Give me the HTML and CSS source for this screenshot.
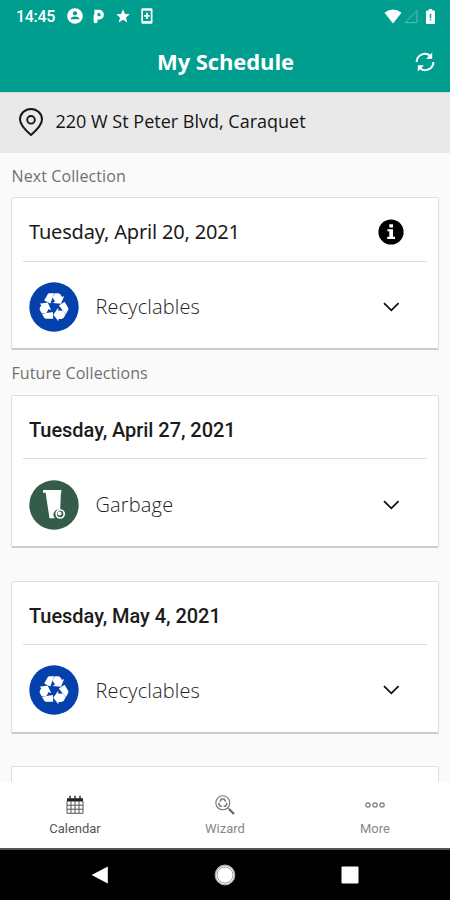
FILE: index.html
```html
<!DOCTYPE html>
<html lang="en">
<head>
<meta charset="utf-8">
<title>My Schedule</title>
<link rel="stylesheet" href="styles.css">
</head>
<body>
<svg class="defs" aria-hidden="true">
  <symbol id="recycle" viewBox="-25 -25 50 50">
    <circle r="24.7" fill="#0441ad"/>
    <g id="arm" fill="#fff">
      <path d="M-9.8-6.6-6.4-12.6Q-5.7-13.8-4.4-13.8H.3L-3.7-3.4Z"/>
      <path d="M.8-13.8H4.2Q5.8-13.8 6.7-12.2L8-9.9 10.2-11 7-3.2-1.4-4 1-5.6-1.4-9.6Z"/>
    </g>
    <use href="#arm" transform="rotate(120)"/>
    <use href="#arm" transform="rotate(240)"/>
  </symbol>
  <symbol id="bin" viewBox="-25 -25 50 50">
    <circle r="24.7" fill="#355c49"/>
    <path d="M-11-15H7.3V-12.2H6.9L6.2 5A5 5 0 0 0 1 13.3H-4.5L-8.4-12.2H-11Z" fill="#fff"/>
    <circle cx="6.2" cy="9" r="4" fill="#355c49" stroke="#fff" stroke-width="1.7"/>
    <circle cx="5.6" cy="8.6" r="2" fill="#fff"/>
  </symbol>
  <symbol id="chevron" viewBox="0 0 18 12">
    <path d="M2 2.2 9.3 9.3 16.6 2.2" fill="none" stroke="#111" stroke-width="1.8"/>
  </symbol>
</svg>

<header class="top">
  <div class="status">
    <span class="clock">14:45</span>
    <svg class="s-user" width="16" height="16" viewBox="0 0 16 16"><circle cx="8" cy="8" r="7.8" fill="#fff"/><circle cx="8" cy="5.3" r="2.1" fill="#009e8f"/><path d="M3.6 11.3Q4 8.6 8 8.6T12.4 11.3Z" fill="#009e8f"/></svg>
    <svg class="s-p" width="12" height="15" viewBox="0 0 12 15"><path fill="#fff" fill-rule="evenodd" d="M1.4.8H6A4.9 4.9 0 0 1 6 10.6H4.6V12.6Q4.4 14.2 2.6 14.2T.6 12.6V6.5Q.6 5.6 1.4 5.2ZM4.6 4.1V7.3H6A1.6 1.6 0 0 0 6 4.1Z"/></svg>
    <svg class="s-star" width="14" height="14" viewBox="0 0 14 14"><path fill="#fff" d="M7 .3 9 5 13.8 5.3 10 8.6 11.3 13.5 7 10.8 2.7 13.5 4 8.6.2 5.3 5 5Z"/></svg>
    <svg class="s-phone" width="12" height="16" viewBox="0 0 12 16"><rect x=".3" y=".2" width="11.2" height="15.6" rx="1.4" fill="#fff"/><rect x="2" y="2.7" width="7.8" height="10.4" fill="#009e8f"/><path d="M5.9 4.7V11M3.2 7.9H8.6" stroke="#fff" stroke-width="1.7"/></svg>
    <span class="spacer"></span>
    <svg width="18" height="15" viewBox="0 0 18 15"><path fill="#fff" d="M.5 3.7Q9-2.8 17.5 3.7L9 14.5Z"/></svg>
    <svg class="s-signal" width="14" height="15" viewBox="0 0 14 15"><path d="M13 1.4V13.6H1Z" fill="none" stroke="#58bdb2" stroke-width="1"/></svg>
    <svg class="s-batt" width="9" height="15" viewBox="0 0 9 15"><path fill="#fff" d="M2.8 0H6.2V1.4H8Q9 1.4 9 2.4V14Q9 15 8 15H1Q0 15 0 14V2.4Q0 1.4 1 1.4H2.8Z"/><path d="M4.5 4.7V9.2M4.5 10.3V11.6" stroke="#009e8f" stroke-width="1.5"/></svg>
  </div>
  <div class="titlebar">
    <h1>My Schedule</h1>
    <svg class="refresh" width="20" height="20" viewBox="0 0 20 20"><g id="sync"><path d="M1.6 10A8.3 8.3 0 0 1 15.4 4" fill="none" stroke="#fff" stroke-width="2"/><path d="M17.2.6V6.8H11Z" fill="#fff"/></g><use href="#sync" transform="rotate(180 10 10)"/></svg>
  </div>
</header>

<div class="address">
  <svg width="26" height="30" viewBox="0 0 26 30"><path d="M13 28Q2 18.5 2 12.5A11 10.6 0 0 1 24 12.5Q24 18.5 13 28Z" fill="none" stroke="#181818" stroke-width="2"/><circle cx="13" cy="12.8" r="3.8" fill="none" stroke="#181818" stroke-width="1.9"/></svg>
  <span>220 W St Peter Blvd, Caraquet</span>
</div>

<main class="content">
  <h2 class="label-next">Next Collection</h2>
  <section class="card first">
    <div class="date next"><span>Tuesday, April 20, 2021</span>
      <svg class="info" width="26" height="26" viewBox="0 0 26 26"><circle cx="13" cy="13" r="12.6" fill="#000"/><path fill="#fff" d="M11.3 5.2H15V8.4H11.3ZM9.4 10.2H15V17.8H17V20H9.2V17.8H11.3V12.3H9.4Z"/></svg></div>
    <div class="item"><svg class="badge"><use href="#recycle"/></svg><span>Recyclables</span><svg class="chev"><use href="#chevron"/></svg></div>
  </section>
  <h2 class="label-future">Future Collections</h2>
  <section class="card">
    <div class="date"><span>Tuesday, April 27, 2021</span></div>
    <div class="item"><svg class="badge"><use href="#bin"/></svg><span>Garbage</span><svg class="chev"><use href="#chevron"/></svg></div>
  </section>
  <section class="card later">
    <div class="date"><span>Tuesday, May 4, 2021</span></div>
    <div class="item"><svg class="badge"><use href="#recycle"/></svg><span>Recyclables</span><svg class="chev"><use href="#chevron"/></svg></div>
  </section>
  <section class="card later"></section>
</main>

<nav class="tabs">
  <div class="tab active"><svg width="20" height="20" viewBox="0 0 20 20"><path d="M2 3.2H18V6.5H2Z" fill="#222"/><path d="M5 .8V4M10 .8V4M15 .8V4" stroke="#444" stroke-width="1.7"/><path d="M2 6V18.3H18V6M2 10.2H18M2 14.2H18M6 6V18M10 6V18M14 6V18" fill="none" stroke="#555" stroke-width="1"/></svg><span>Calendar</span></div>
  <div class="tab"><svg width="20" height="20" viewBox="0 0 20 20"><circle cx="7.8" cy="7.8" r="7" fill="none" stroke="#777" stroke-width="1.1"/><path d="M5 6.6 6.4 4H9.2L10.6 6.6M11.4 7.8 11.8 9 10.4 11.3H8.6M6.8 11.3H5.2L3.8 9 4.4 7.8" fill="none" stroke="#777" stroke-width="1.5"/><path d="M12.8 12.8 14.2 14.2" stroke="#777" stroke-width="1"/><path d="M14 14 19 19" stroke="#666" stroke-width="2.2"/></svg><span>Wizard</span></div>
  <div class="tab"><svg width="20" height="20" viewBox="0 0 20 20"><g fill="none" stroke="#777" stroke-width="1.2"><circle cx="3" cy="10" r="2.2"/><circle cx="10" cy="10" r="2.2"/><circle cx="17" cy="10" r="2.2"/></g></svg><span>More</span></div>
</nav>

<footer class="system">
  <svg width="18" height="20" viewBox="0 0 18 20"><path d="M.6 10 16.8 1.4V18.6Z" fill="#fff"/></svg>
  <svg class="home" width="22" height="22" viewBox="0 0 22 22"><circle cx="11" cy="11" r="9.8" fill="#fff" stroke="#aaa" stroke-width="1.2"/><circle cx="11" cy="11" r="8" fill="#fff" stroke="#777" stroke-width=".7"/></svg>
  <svg width="18" height="18" viewBox="0 0 18 18"><rect x=".5" y=".5" width="17" height="17" rx="1" fill="#fff"/></svg>
</footer>
</body>
</html>
```
FILE: styles.css
```css
* { box-sizing: border-box; }
body {
  margin: 0;
  width: 450px;
  height: 900px;
  overflow: hidden;
  display: flex;
  flex-direction: column;
  background: #fafafa;
  font-family: "Open Sans", "Noto Sans", sans-serif;
  color: #222;
}
svg { display: block; flex: none; }
span { white-space: nowrap; }
.defs { position: absolute; width: 0; height: 0; }

.top { height: 92px; flex: none; background: #009e8f; color: #fff; }
.status { height: 32px; display: flex; align-items: center; padding: 0 15px 0 16px; }
.clock { font: 500 16px/20px Roboto, sans-serif; width: 50.5px; letter-spacing: -0.3px; padding-top: 1px; }
.s-p { margin-left: 10px; }
.s-star { margin-left: 11px; }
.s-phone { margin-left: 11px; }
.spacer { flex: 1; }
.s-signal { margin-left: 2px; }
.s-batt { margin-left: 8px; }
.titlebar { height: 60px; display: grid; grid-template-columns: 42px 1fr 42px; align-items: center; padding-bottom: 1px; }
h1 { grid-column: 2; margin: 0; padding: 0 0 1px 1px; text-align: center; font-size: 22px; line-height: 30px; font-weight: 700; letter-spacing: -0.1px; }
.refresh { margin-left: 6.5px; }

.address {
  height: 61px;
  flex: none;
  display: flex;
  align-items: center;
  padding: 0 0 2px 18px;
  gap: 11.5px;
  background: #e9e9e9;
  border-top: 1px solid #d5dddb;
  font-size: 18px;
  color: #151515;
}
.address span { padding-bottom: 2px; }

.content { flex: 1; min-height: 0; overflow: hidden; padding: 0 11px; }
h2 { margin: 0; padding-left: 0.5px; font-size: 16px; line-height: 46px; height: 44px; font-weight: 400; color: #707070; letter-spacing: 0.1px; }
.label-future { height: 45px; }
.card {
  height: 153px;
  background: #fff;
  border: 1px solid #dedede;
  border-width: 1px 1px 2px;
  border-bottom-color: #ccc;
  border-radius: 2px;
  padding: 0 11px;
}
.later { margin-top: 32.5px; }
.date {
  height: 63px;
  display: flex;
  align-items: center;
  justify-content: space-between;
  padding: 6px 23px 0 6px;
  border-bottom: 1px solid #ddd;
  font: 500 20px/28px Roboto, sans-serif;
  letter-spacing: -0.04px;
  color: #1b1b1b;
}
.date.next { height: 64px; padding-top: 4px; font: 400 20px/28px "Noto Sans", sans-serif; letter-spacing: -0.18px; }
.item {
  display: flex;
  align-items: center;
  height: 87px;
  padding: 4px 27px 0 6px;
  font-size: 20px;
  font-weight: 300;
  letter-spacing: 0.15px;
  color: #222;
}
.first .item { height: 86px; padding-top: 3px; }
.badge { width: 50px; height: 50px; }
.item span { flex: 1; margin-left: 16.5px; }
.chev { width: 18px; height: 12px; }

.tabs { height: 66px; flex: none; display: flex; background: #fff; }
.tab {
  flex: 1;
  display: flex;
  flex-direction: column;
  align-items: center;
  padding: 13px 0 0;
  gap: 6px;
  font: 400 13px/16px Roboto, sans-serif;
  color: #888;
}
.tab.active { color: #555; }
.system {
  height: 52px;
  flex: none;
  display: grid;
  grid-template-columns: 22px 22px 22px;
  column-gap: 103px;
  justify-content: center;
  align-items: center;
  justify-items: center;
  background: #000;
  border-top: 2px solid #555;
}
```
